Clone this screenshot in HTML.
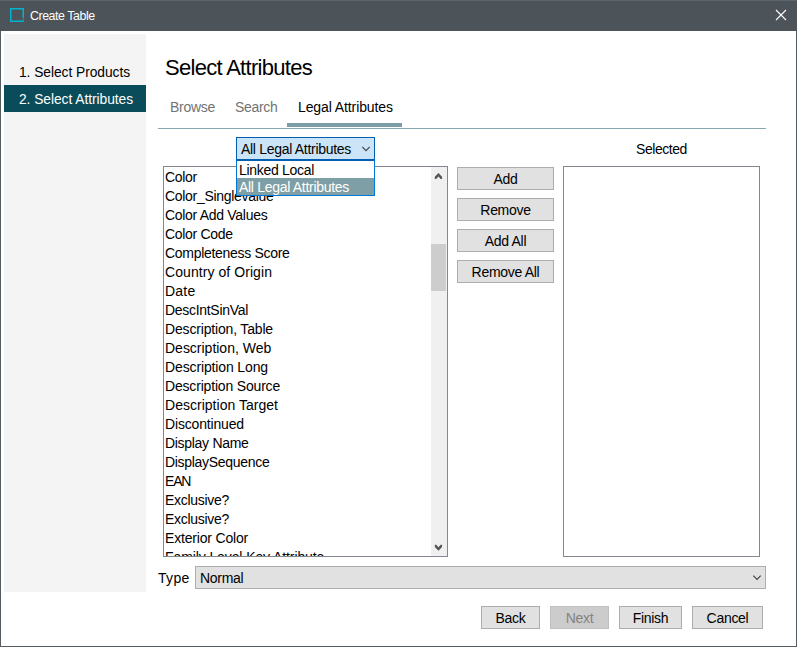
<!DOCTYPE html>
<html><head><meta charset="utf-8">
<style>
*{margin:0;padding:0;box-sizing:border-box}
html,body{width:797px;height:647px;overflow:hidden;background:#fff}
body{position:relative;font-family:"Liberation Sans",sans-serif;color:#000;font-size:14px;letter-spacing:-0.3px}
.a{position:absolute;white-space:nowrap}
#win{position:absolute;left:0;top:0;width:797px;height:647px;border:1px solid #555c61;border-top:none;background:#fff}
#title{position:absolute;left:0;top:0;width:797px;height:31px;background:#4c5359;border-top:1px solid #5e656a}
.btn{position:absolute;background:#e1e1e1;border:1px solid #adadad;text-align:center;line-height:21px;height:23px;padding-top:1px}
.list{position:absolute;border:1px solid #828790;background:#fff}
.row{position:absolute;left:1px;height:19px;line-height:19px;white-space:nowrap}
</style></head><body>
<div id="win"></div>
<div id="title">
  <svg class="a" style="left:0;top:-1px" width="30" height="30" viewBox="0 0 30 30" fill="#00b4cd"><rect x="10" y="8" width="14" height="1.5"/><rect x="10" y="8" width="1.5" height="14"/><rect x="10" y="20.5" width="14" height="1.5"/><rect x="22.5" y="8" width="1.5" height="10"/><rect x="22.7" y="18.9" width="1.1" height="1.1"/></svg>
  <div class="a" style="left:30px;top:7px;font-size:12.4px;letter-spacing:-0.45px;line-height:16px;color:#fff">Create Table</div>
  <svg class="a" style="left:775px;top:8px" width="12" height="12" viewBox="0 0 12 12"><path d="M1 1L11 11M11 1L1 11" stroke="#fff" stroke-width="1.1"/></svg>
</div>

<!-- sidebar -->
<div class="a" style="left:4px;top:34px;width:142px;height:558px;background:#f4f4f4"></div>
<div class="a" style="left:4px;top:85px;width:142px;height:27px;background:#0a4c5a"></div>
<div class="a" style="left:19px;top:63px;font-size:13.8px;letter-spacing:-0.05px;line-height:19px">1. Select Products</div>
<div class="a" style="left:19px;top:90px;font-size:13.8px;letter-spacing:-0.05px;line-height:19px;color:#fff">2. Select Attributes</div>

<!-- header -->
<div class="a" style="left:165px;top:56px;font-size:22px;letter-spacing:-0.7px;line-height:24px">Select Attributes</div>

<!-- tabs -->
<div class="a" style="left:170px;top:98px;line-height:19px;color:#737373">Browse</div>
<div class="a" style="left:235px;top:98px;line-height:19px;color:#737373">Search</div>
<div class="a" style="left:298px;top:98px;line-height:19px;letter-spacing:-0.1px">Legal Attributes</div>
<div class="a" style="left:287px;top:123px;width:115px;height:4px;background:#7c9fa7"></div>
<div class="a" style="left:158px;top:128px;width:608px;height:1px;background:#86a9b1"></div>

<!-- Selected label -->
<div class="a" style="left:636px;top:140px;line-height:19px;font-size:14px;letter-spacing:-0.45px">Selected</div>

<!-- attributes list -->
<div class="list" style="left:163px;top:166px;width:285px;height:391px;overflow:hidden">
  <div class="a" style="left:267px;top:0;width:16px;height:389px;background:#f0f0f0"></div>
  <div class="a" style="left:267px;top:77px;width:15px;height:47px;background:#cdcdcd"></div>
  <svg class="a" style="left:270px;top:5px" width="10" height="8" viewBox="0 0 10 8"><path d="M0.85 6.9L0.85 4.7L4.45 0.9L8.05 4.7L8.05 6.9L6.7 6.9L4.45 4.4L2.2 6.9Z" fill="#555"/></svg>
  <svg class="a" style="left:270px;top:377px" width="10" height="8" viewBox="0 0 10 8"><path d="M0.85 0.85L0.85 3.05L4.45 6.85L8.05 3.05L8.05 0.85L6.7 0.85L4.45 3.35L2.2 0.85Z" fill="#555"/></svg>
  <div class="row" style="top:1px">Color</div>
  <div class="row" style="top:20px">Color_Singlevalue</div>
  <div class="row" style="top:39px">Color Add Values</div>
  <div class="row" style="top:58px">Color Code</div>
  <div class="row" style="top:77px">Completeness Score</div>
  <div class="row" style="top:96px;letter-spacing:0.07px">Country of Origin</div>
  <div class="row" style="top:115px;letter-spacing:0.2px">Date</div>
  <div class="row" style="top:134px">DescIntSinVal</div>
  <div class="row" style="top:153px;letter-spacing:-0.17px">Description, Table</div>
  <div class="row" style="top:172px;letter-spacing:-0.01px">Description, Web</div>
  <div class="row" style="top:191px;letter-spacing:-0.13px">Description Long</div>
  <div class="row" style="top:210px;letter-spacing:-0.18px">Description Source</div>
  <div class="row" style="top:229px;letter-spacing:0.02px">Description Target</div>
  <div class="row" style="top:248px;letter-spacing:-0.17px">Discontinued</div>
  <div class="row" style="top:267px">Display Name</div>
  <div class="row" style="top:286px">DisplaySequence</div>
  <div class="row" style="top:305px;letter-spacing:-1.2px">EAN</div>
  <div class="row" style="top:324px">Exclusive?</div>
  <div class="row" style="top:343px">Exclusive?</div>
  <div class="row" style="top:362px;letter-spacing:-0.18px">Exterior Color</div>
  <div class="row" style="top:381px;letter-spacing:-0.1px">Family Level Key Attribute</div>
</div>

<!-- selected list -->
<div class="list" style="left:563px;top:166px;width:197px;height:391px"></div>

<!-- middle buttons -->
<div class="btn" style="left:457px;top:167px;width:97px">Add</div>
<div class="btn" style="left:457px;top:198px;width:97px">Remove</div>
<div class="btn" style="left:457px;top:229px;width:97px">Add All</div>
<div class="btn" style="left:457px;top:260px;width:97px">Remove All</div>

<!-- combo dropdown -->
<div class="a" style="left:236px;top:137px;width:139px;height:23px;background:#cce4f7;border:1px solid #005fb3"></div>
<div class="a" style="left:241px;top:140px;line-height:19px">All Legal Attributes</div>
<svg class="a" style="left:361px;top:145px" width="11" height="8" viewBox="0 0 11 8"><path d="M1.3 1.9L5 5.6L8.7 1.9" stroke="#404040" stroke-width="1.1" fill="none"/></svg>
<div class="a" style="left:236px;top:159px;width:139px;height:37px;background:#fff;border:1px solid #0078d7;border-top:2px solid #005fb3"></div>
<div class="a" style="left:237px;top:178px;width:137px;height:17px;background:#7f9fa6"></div>
<div class="a" style="left:239px;top:161px;line-height:19px">Linked Local</div>
<div class="a" style="left:239px;top:178px;line-height:19px;color:#fff">All Legal Attributes</div>

<!-- Type -->
<div class="a" style="left:158px;top:569px;line-height:19px;font-size:14px;letter-spacing:0.3px">Type</div>
<div class="a" style="left:195px;top:566px;width:571px;height:23px;background:#e1e1e1;border:1px solid #adadad"></div>
<div class="a" style="left:200px;top:569px;line-height:19px">Normal</div>
<svg class="a" style="left:752px;top:574px" width="11" height="8" viewBox="0 0 11 8"><path d="M1.3 1.6L5 5.4L8.7 1.6" stroke="#404040" stroke-width="1.1" fill="none"/></svg>

<!-- bottom buttons -->
<div class="btn" style="left:481px;top:606px;width:59px">Back</div>
<div class="btn" style="left:550px;top:606px;width:59px;background:#cccccc;border-color:#bfbfbf;color:#838383">Next</div>
<div class="btn" style="left:619px;top:606px;width:63px">Finish</div>
<div class="btn" style="left:692px;top:606px;width:71px">Cancel</div>
</body></html>
